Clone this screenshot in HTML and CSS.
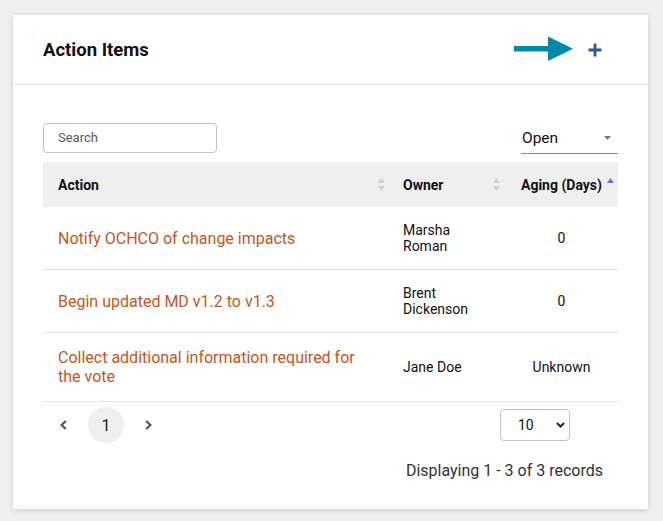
FILE: index.html
```html
<!DOCTYPE html>
<html>
<head>
<meta charset="utf-8">
<link rel="stylesheet" href="styles.css">
</head>
<body>
<div class="card">
  <div class="card-header">
    <h2 class="title">Action Items</h2>
    <div class="header-actions">
      <svg class="arrow" width="60" height="26" viewBox="0 0 60 26"><rect x="0" y="10" width="36" height="5.5" fill="#0088a9"/><polygon points="34,0.5 59,12.75 34,25" fill="#0088a9"/></svg>
      <svg class="plus" width="14" height="14" viewBox="0 0 14 14"><path d="M7 0.5V13.5M0.5 7H13.5" stroke="#2c5b8b" stroke-width="2.8"/></svg>
    </div>
  </div>
  <div class="card-body">
    <div class="toolbar">
      <div class="search">Search</div>
      <div class="status-select"><span>Open</span><svg width="7" height="4" viewBox="0 0 7 4"><polygon points="0,0 7,0 3.5,4" fill="#777"/></svg></div>
    </div>
    <table class="grid">
      <colgroup><col class="c1"><col class="c2"><col class="c3"></colgroup>
      <thead>
        <tr>
          <th class="th-action"><div class="th-in"><span>Action</span><svg class="sort" width="7" height="13" viewBox="0 0 7 13"><polygon points="0,5 3.5,0 7,5" fill="#d0d0d0"/><polygon points="0,8 7,8 3.5,13" fill="#d0d0d0"/></svg></div></th>
          <th class="th-owner"><div class="th-in"><span>Owner</span><svg class="sort" width="7" height="13" viewBox="0 0 7 13"><polygon points="0,5 3.5,0 7,5" fill="#d0d0d0"/><polygon points="0,8 7,8 3.5,13" fill="#d0d0d0"/></svg></div></th>
          <th class="th-aging">Aging (Days)<svg class="sort-active" width="7" height="5" viewBox="0 0 7 5"><polygon points="0,5 3.5,0 7,5" fill="#6d70d8"/></svg></th>
        </tr>
      </thead>
      <tbody>
        <tr>
          <td class="action">Notify OCHCO of change impacts</td>
          <td class="owner">Marsha<br>Roman</td>
          <td class="aging">0</td>
        </tr>
        <tr>
          <td class="action">Begin updated MD v1.2 to v1.3</td>
          <td class="owner">Brent<br>Dickenson</td>
          <td class="aging">0</td>
        </tr>
        <tr>
          <td class="action">Collect additional information required for the vote</td>
          <td class="owner">Jane Doe</td>
          <td class="aging">Unknown</td>
        </tr>
      </tbody>
    </table>
    <div class="pager">
      <div class="pages">
        <svg class="chev" width="7" height="10" viewBox="0 0 7 10"><polyline points="5.8,1 1.6,5 5.8,9" fill="none" stroke="#555" stroke-width="2.2"/></svg>
        <span class="page-num">1</span>
        <svg class="chev" width="7" height="10" viewBox="0 0 7 10"><polyline points="1.2,1 5.4,5 1.2,9" fill="none" stroke="#555" stroke-width="2.2"/></svg>
      </div>
      <div class="size-select"><span>10</span><svg width="9" height="6" viewBox="0 0 9 6"><polyline points="1,1 4.5,4.5 8,1" fill="none" stroke="#222" stroke-width="2"/></svg></div>
    </div>
    <div class="records">Displaying 1 - 3 of 3 records</div>
  </div>
</div>
</body>
</html>
```

FILE: styles.css
```css
html, body {
  margin: 0;
  padding: 0;
  background: #f0f0f0;
  font-family: Roboto, "Liberation Sans", sans-serif;
  color: #111;
}

.card {
  margin: 15px 15px 12px 13px;
  width: 635px;
  background: #fff;
  box-shadow: 0 1px 6px rgba(0, 0, 0, 0.16);
}

.card-header {
  height: 69px;
  border-bottom: 1px solid #e2e2e8;
  display: flex;
  align-items: center;
  padding: 0 46px 0 30px;
}

.title {
  margin: 0;
  font-size: 18.5px;
  font-weight: 700;
  color: #111;
  flex: 1;
}

.header-actions {
  display: flex;
  align-items: center;
  gap: 14px;
}

.arrow {
  display: block;
  margin-top: -2px;
}

.plus {
  display: block;
  margin-top: 1px;
}

.card-body {
  padding: 38px 30px 29px 30px;
}

.toolbar {
  display: flex;
  justify-content: space-between;
  align-items: flex-start;
  margin-bottom: 8px;
}

.search {
  box-sizing: border-box;
  width: 174px;
  height: 30px;
  border: 1px solid #c2c2c2;
  border-radius: 4px;
  padding-left: 14px;
  font-size: 13px;
  color: #5a5a5a;
  line-height: 28px;
}

.status-select {
  box-sizing: border-box;
  width: 97px;
  height: 31px;
  border-bottom: 1px solid #8a8a8a;
  display: flex;
  align-items: center;
  justify-content: space-between;
  padding: 0 7px 0 1px;
  font-size: 15.5px;
  color: #111;
}

.grid {
  width: 575px;
  border-collapse: collapse;
  table-layout: fixed;
}

.c1 { width: 345px; }
.c2 { width: 117px; }
.c3 { width: 113px; }

.grid th {
  height: 45px;
  background: #efefef;
  font-size: 14px;
  font-weight: 700;
  text-align: left;
  padding: 0;
  color: #111;
}

.th-in {
  display: flex;
  align-items: center;
  justify-content: space-between;
}

.th-action .th-in {
  padding: 0 3px 0 15px;
}

.th-owner .th-in {
  padding: 0 5px 0 15px;
}

.sort {
  display: block;
}

.grid th.th-aging {
  text-align: center;
}

.sort-active {
  display: inline-block;
  vertical-align: 7px;
  margin-left: 5px;
  margin-right: -12px;
}

.grid td {
  border-bottom: 1px solid #e2e2e2;
  padding: 15px;
  vertical-align: middle;
}

.grid td.action {
  font-size: 16px;
  line-height: 19px;
  color: #c5561c;
  padding-right: 30px;
}

.grid td.owner {
  font-size: 14px;
  line-height: 16px;
  color: #111;
}

.grid td.aging {
  font-size: 14px;
  line-height: 16px;
  text-align: center;
  color: #111;
}

.pager {
  display: flex;
  justify-content: space-between;
  align-items: center;
  margin-top: 5px;
  padding-left: 17px;
  padding-right: 48px;
}

.pages {
  display: flex;
  align-items: center;
  gap: 21px;
}

.chev {
  display: block;
}

.page-num {
  width: 36px;
  height: 36px;
  border-radius: 50%;
  background: #efefef;
  display: flex;
  align-items: center;
  justify-content: center;
  font-size: 16px;
  color: #222;
}

.size-select {
  box-sizing: border-box;
  width: 70px;
  height: 32px;
  border: 1px solid #c4c4c4;
  border-radius: 4px;
  display: flex;
  align-items: center;
  justify-content: space-between;
  padding: 0 4px 0 17px;
  font-size: 14px;
  color: #111;
}

.size-select svg {
  display: block;
}

.records {
  margin-top: 18px;
  text-align: right;
  padding-right: 15px;
  font-size: 16px;
  line-height: 19px;
  color: #333;
}
```
